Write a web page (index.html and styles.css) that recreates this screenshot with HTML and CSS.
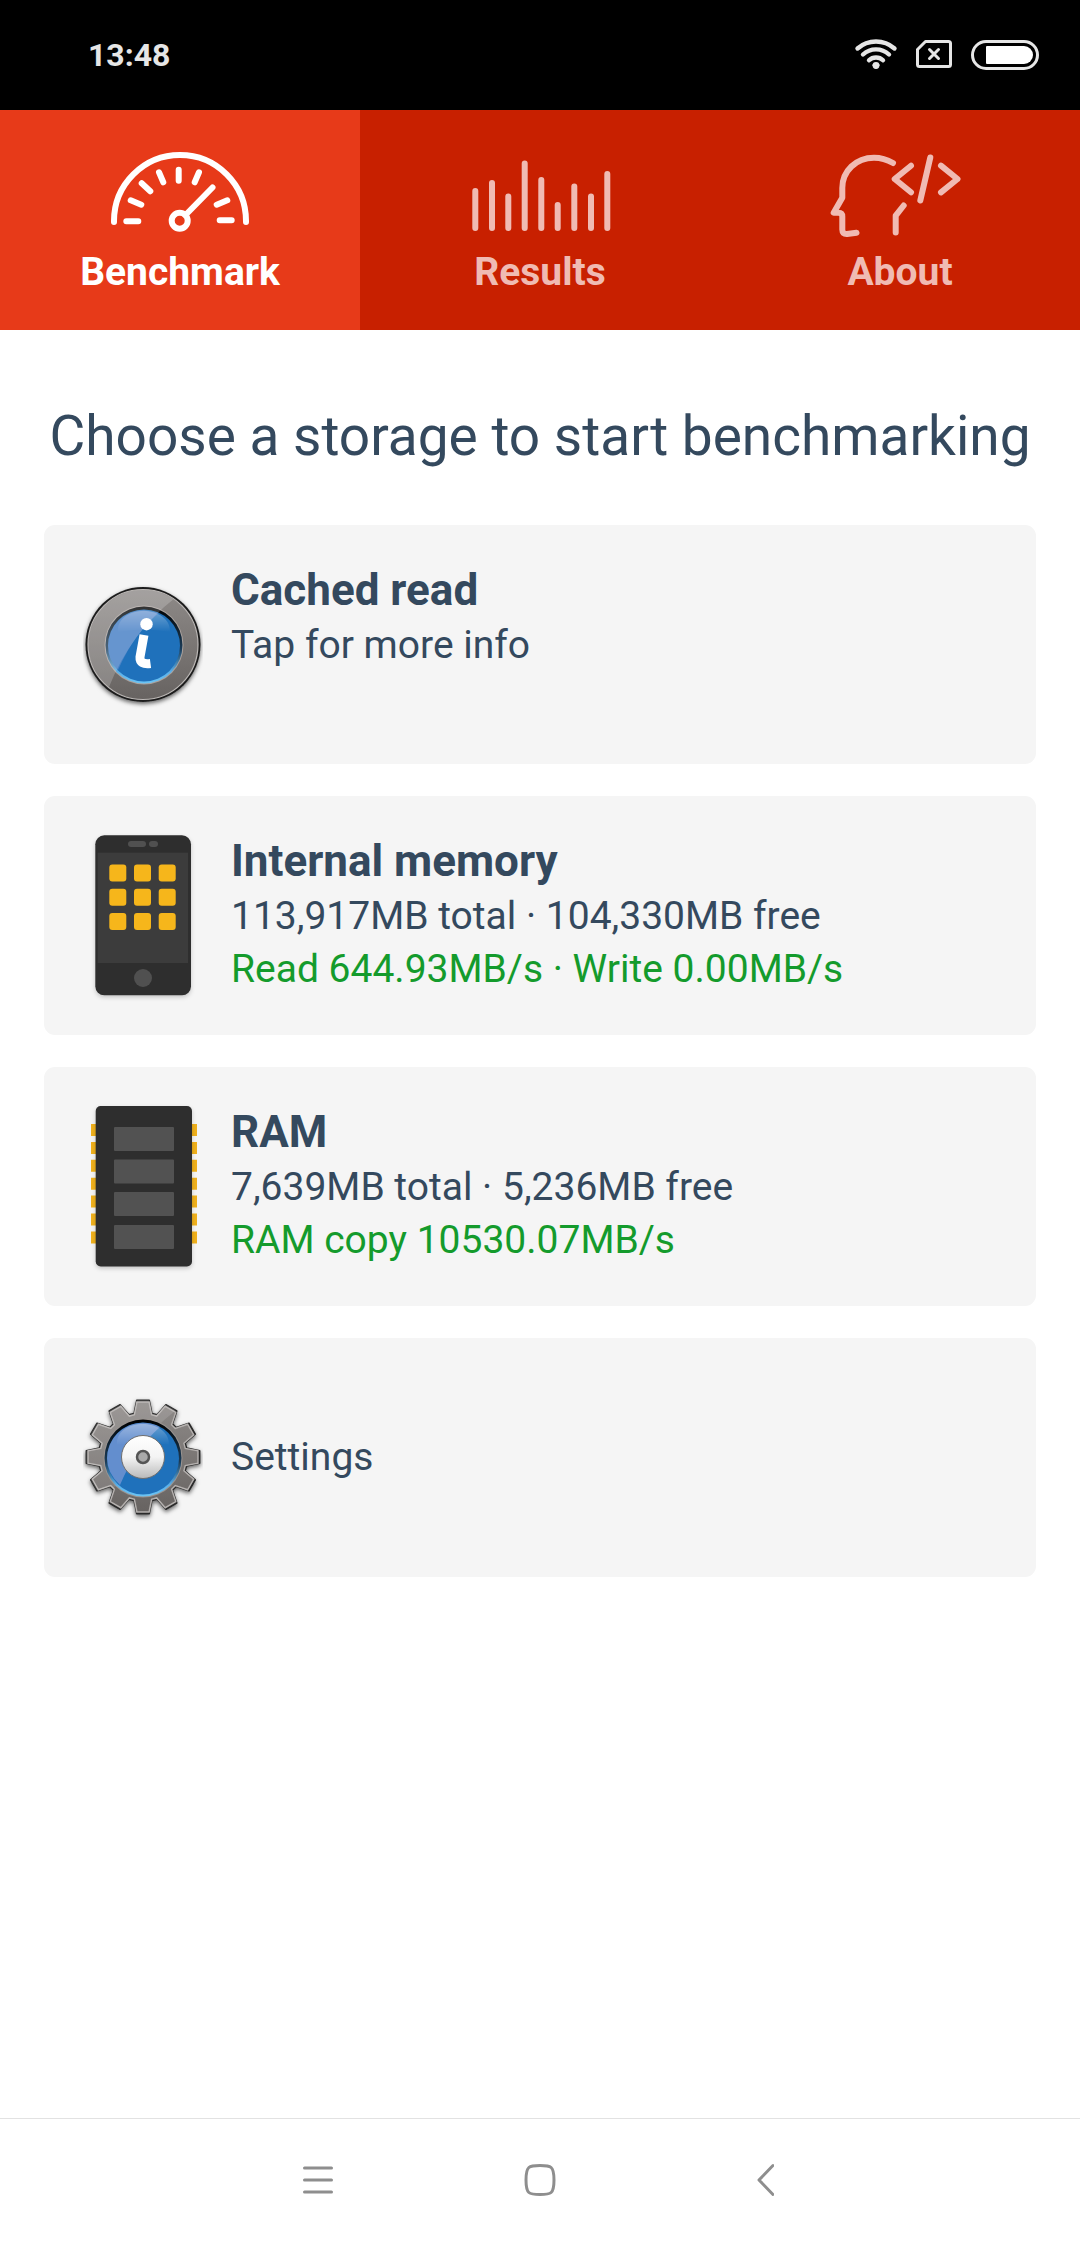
FILE: index.html
```html
<!DOCTYPE html>
<html lang="en">
<head>
    <meta charset="UTF-8">
    <meta name="viewport" content="width=device-width, initial-scale=1">
    <title>Storage benchmark</title>
    <link rel="stylesheet" href="styles.css">
</head>

<body>

<div class="status-bar">
    <span class="clock">13:48</span>
    <div class="status-icons">
        <svg width="44" height="40" viewBox="4 0 44 40" fill="none" stroke="#e6e6e6" stroke-width="4.4" stroke-linecap="round">
            <path d="M7.5 13.5A28 28 0 0 1 44.5 13.5"/>
            <path d="M13 19.5A19 19 0 0 1 39 19.5"/>
            <path d="M19 25.3A10 10 0 0 1 33 25.3"/>
            <path d="M22 30Q26 26 30 30L26 34Z" fill="#e6e6e6" stroke="none"/>
            <circle cx="26" cy="30.5" r="3.4" fill="#e6e6e6" stroke="none"/>
        </svg>
        <svg width="38" height="40" viewBox="65 0 38 40" fill="none" stroke="#e6e6e6" stroke-width="3" stroke-linejoin="round" stroke-linecap="round">
            <path d="M75.5 6.5H98.5Q100.5 6.5 100.5 8.5V29.5Q100.5 31.5 98.5 31.5H69.5Q67.5 31.5 67.5 29.5V14.5Z"/>
            <path d="M79.5 14.5L88.5 23.5M88.5 14.5L79.5 23.5"/>
        </svg>
        <svg width="70" height="40" viewBox="120 0 70 40">
            <rect x="122.5" y="6.5" width="65" height="27" rx="13.5" fill="none" stroke="#e6e6e6" stroke-width="3"/>
            <path d="M137 11H174A9 9 0 0 1 174 29H137Q136 29 136 28V12Q136 11 137 11Z" fill="#fff"/>
        </svg>
    </div>
</div>

<nav class="tabs">
    <button class="tab active">
        <svg width="150" height="104" viewBox="0 0 150 104" class="line-icon">
            <path d="M9 77V76A66 66 0 0 1 141 76V77"/>
            <path d="M73.7 24.7V35.7M54 27.3L58.3 37.3M36.7 38.3L45.3 46.3M25.7 55.3L36.3 59.7M21.3 76.3H33.3M94 27.3L89.7 37.3M122.3 55.3L111.7 59.7M114.7 75.3H126.7"/>
            <path d="M80.5 70L107.5 42.5"/>
            <circle cx="74.7" cy="75.7" r="8"/>
        </svg>
        <span>Benchmark</span>
    </button>
    <button class="tab">
        <svg width="150" height="104" viewBox="0 0 150 104" class="line-icon">
            <path d="M10.3 46V83M27 38V83M43.3 51.5V83M59.7 18.5V83M76.3 35V83M92.7 60V83M109.3 41.5V83M126 51.5V83M142.3 29V83"/>
        </svg>
        <span>Results</span>
    </button>
    <button class="tab">
        <svg width="150" height="104" viewBox="0 0 150 104" class="line-icon">
            <path d="M68 18C62 14.5 56 12.7 49 12.7C31 12.7 17.3 26 17.3 43V52.7L8.7 67.7H13.5Q17.3 67.7 17.3 71.5V84.5Q17.3 89.3 22 89L31.5 87.7"/>
            <path d="M86 20.7L69.7 34L86 47.3M105.3 12.5L95.3 55.5M116 20.7L132.5 34L116 47.3M78.7 60.5L70.7 70.7V87.5"/>
        </svg>
        <span>About</span>
    </button>
</nav>

<main class="content">
    <h1>Choose a storage to start benchmarking</h1>

    <div class="cards">
        <button class="card">
            <svg width="120" height="181" viewBox="0 0 120 181">
                <defs>
                    <linearGradient id="metal" x1="0" y1="0" x2="0" y2="1">
                        <stop offset="0" stop-color="#8e8a88"/>
                        <stop offset="1" stop-color="#676361"/>
                    </linearGradient>
                    <linearGradient id="rim" x1="0" y1="0" x2="0" y2="1">
                        <stop offset="0" stop-color="#000"/>
                        <stop offset="0.55" stop-color="#1b3c58"/>
                        <stop offset="0.85" stop-color="#5ab0ea"/>
                        <stop offset="1" stop-color="#6cc4f4"/>
                    </linearGradient>
                    <linearGradient id="gloss" x1="0" y1="0" x2="0" y2="1">
                        <stop offset="0" stop-color="#fff" stop-opacity="0.35"/>
                        <stop offset="1" stop-color="#fff" stop-opacity="0"/>
                    </linearGradient>
                    <linearGradient id="silver" x1="0" y1="0" x2="0" y2="1">
                        <stop offset="0" stop-color="#fff"/>
                        <stop offset="0.5" stop-color="#f4f4f4"/>
                        <stop offset="1" stop-color="#b9b9b9"/>
                    </linearGradient>
                    <filter id="shadow" x="-20%" y="-20%" width="140%" height="140%">
                        <feDropShadow dx="0" dy="2" stdDeviation="2" flood-opacity="0.6"/>
                    </filter>
                    <filter id="soft" x="-20%" y="-20%" width="140%" height="140%">
                        <feDropShadow dx="0" dy="2" stdDeviation="2" flood-opacity="0.2"/>
                    </filter>
                    <clipPath id="info-clip"><circle cx="60" cy="90.5" r="54.5"/></clipPath>
                </defs>
                <circle cx="60" cy="90.5" r="57.5" fill="#1c1c1c" filter="url(#shadow)"/>
                <circle cx="60" cy="90.5" r="55" fill="url(#metal)" stroke="#bcb8b6" stroke-width="1.2"/>
                <circle cx="61" cy="91" r="39.5" fill="#aaa29e"/>
                <circle cx="61" cy="91" r="38.5" fill="url(#rim)"/>
                <circle cx="61" cy="91.5" r="36" fill="#1f71bb"/>
                <path d="M0 30H95L92 44Q48 78 26 133L0 140Z" fill="#fff" fill-opacity="0.2" clip-path="url(#info-clip)"/>
                <path d="M35 78C33 50 88 50 87 78Q61 73 35 78Z" fill="url(#gloss)"/>
                <path d="M25 92A36 36 0 0 1 61 56L76 59Q52 78 35 116Q25 106 25 92Z" fill="#9aa6de" fill-opacity="0.35"/>
                <circle cx="63.5" cy="70.2" r="6.2" fill="#fff"/>
                <path d="M61 81L57 103Q56.5 111 67.5 109.5" fill="none" stroke="#fff" stroke-width="9"/>
            </svg>
            <span class="card-text">
                <strong>Cached read</strong>
                <span>Tap for more info</span>
                <span class="speed"></span>
            </span>
        </button>

        <button class="card">
            <svg width="120" height="181" viewBox="0 0 120 181">
                <rect x="12.3" y="10.3" width="95.7" height="160" rx="9" fill="#2f2f2f" filter="url(#soft)"/>
                <rect x="14.7" y="27.7" width="90.3" height="110.3" fill="#3c3c3c"/>
                <rect x="45" y="16" width="18" height="6" rx="3" fill="#505050"/>
                <rect x="66" y="16" width="9" height="6" rx="3" fill="#505050"/>
                <circle cx="60" cy="153" r="9" fill="#505050"/>
                <g fill="#f6b61b">
                    <rect x="26.3" y="39.5" width="17" height="17" rx="3"/>
                    <rect x="51" y="39.5" width="17" height="17" rx="3"/>
                    <rect x="75.7" y="39.5" width="17" height="17" rx="3"/>
                    <rect x="26.3" y="63.8" width="17" height="17" rx="3"/>
                    <rect x="51" y="63.8" width="17" height="17" rx="3"/>
                    <rect x="75.7" y="63.8" width="17" height="17" rx="3"/>
                    <rect x="26.3" y="88" width="17" height="17" rx="3"/>
                    <rect x="51" y="88" width="17" height="17" rx="3"/>
                    <rect x="75.7" y="88" width="17" height="17" rx="3"/>
                </g>
            </svg>
            <span class="card-text">
                <strong>Internal memory</strong>
                <span>113,917MB total · 104,330MB free</span>
                <span class="speed">Read 644.93MB/s · Write 0.00MB/s</span>
            </span>
        </button>

        <button class="card">
            <svg width="120" height="181" viewBox="0 0 120 181">
                <!-- pins, hidden behind the chip body in the middle -->
                <path d="M61 28V148" stroke="#f0b11c" stroke-width="106" stroke-dasharray="12 5.9"/>
                <rect x="12.7" y="10" width="96.3" height="160.5" rx="5" fill="#2f2f2f" filter="url(#soft)"/>
                <g fill="#525252">
                    <rect x="31" y="31" width="60" height="24" rx="1"/>
                    <rect x="31" y="63.5" width="60" height="24" rx="1"/>
                    <rect x="31" y="96" width="60" height="24" rx="1"/>
                    <rect x="31" y="129" width="60" height="24" rx="1"/>
                </g>
            </svg>
            <span class="card-text">
                <strong>RAM</strong>
                <span>7,639MB total · 5,236MB free</span>
                <span class="speed">RAM copy 10530.07MB/s</span>
            </span>
        </button>

        <button class="card">
            <svg width="120" height="181" viewBox="-60 -90 120 181">
                <defs>
                    <path id="gear" d="M-8.9 -43.6L-6.3 -56.7H6.3L8.9 -43.6L14.1 -42.2L22.9 -52.3L33.8 -46L29.5 -33.3L33.3 -29.5L46 -33.8L52.3 -22.9L42.2 -14.1L43.6 -8.9L56.7 -6.3V6.3L43.6 8.9L42.2 14.1L52.3 22.9L46 33.8L33.3 29.5L29.5 33.3L33.8 46L22.9 52.3L14.1 42.2L8.9 43.6L6.3 56.7H-6.3L-8.9 43.6L-14.1 42.2L-22.9 52.3L-33.8 46L-29.5 33.3L-33.3 29.5L-46 33.8L-52.3 22.9L-42.2 14.1L-43.6 8.9L-56.7 6.3V-6.3L-43.6 -8.9L-42.2 -14.1L-52.3 -22.9L-46 -33.8L-33.3 -29.5L-29.5 -33.3L-33.8 -46L-22.9 -52.3L-14.1 -42.2Z"/>
                    <clipPath id="gear-clip"><use href="#gear"/></clipPath>
                </defs>
                <use href="#gear" fill="#222" stroke="#2a2a2a" stroke-width="1.5" stroke-linejoin="round" filter="url(#shadow)"/>
                <use href="#gear" fill="url(#metal)" stroke="#b5b1af" stroke-width="1.5" transform="scale(0.97)"/>
                <path d="M-60 -60H38L32 -46Q-12 -12 -34 43L-60 50Z" fill="#fff" fill-opacity="0.12" clip-path="url(#gear-clip)"/>
                <circle cx="0" cy="1" r="39.5" fill="#9a9491"/>
                <circle cx="0" cy="1" r="38.5" fill="url(#rim)"/>
                <circle cx="0" cy="1.5" r="36" fill="#1f71bb"/>
                <path d="M-23 28Q-36 16 -36 1A36 36 0 0 1 17 -30Q-8 -8 -23 28Z" fill="#9aa6de" fill-opacity="0.55"/>
                <path d="M-26 -12C-28 -40 27 -40 26 -12Q0 -17 -26 -12Z" fill="url(#gloss)"/>
                <circle r="21.5" fill="url(#silver)" stroke="#6e6e6e" stroke-width="1"/>
                <circle r="6" fill="#aaa" stroke="#555" stroke-width="2.5"/>
            </svg>
            <span class="card-text">
                <span>Settings</span>
            </span>
        </button>
    </div>
</main>

<div class="nav-bar">
    <button aria-label="Menu">
        <svg width="32" height="34" viewBox="0 0 32 34"><path d="M2.5 5H29.5M2.5 17H29.5M2.5 29H29.5"/></svg>
    </button>
    <button aria-label="Home">
        <svg width="34" height="34" viewBox="0 0 34 34"><path d="M17 2.5C28 2.5 31 3 31 17C31 31 28 31.5 17 31.5C6 31.5 3 31 3 17C3 3 6 2.5 17 2.5Z"/></svg>
    </button>
    <button aria-label="Back">
        <svg width="24" height="34" viewBox="0 0 24 34"><path d="M23 2.5L9 17L23 31.5"/></svg>
    </button>
</div>

</body>
</html>
```
FILE: styles.css
```css
* {
    box-sizing: border-box;
}

body {
    margin: 0;
    min-height: 100vh;
    display: flex;
    flex-direction: column;
    background: #fff;
    color: #34495e;
    font-family: Roboto, "Liberation Sans", sans-serif;
    font-size: 39px;
}

button {
    margin: 0;
    padding: 0;
    border: none;
    background: none;
    color: inherit;
    font: inherit;
    cursor: pointer;
}

svg {
    display: block;
    flex: none;
}

/* system status bar */
.status-bar {
    height: 110px;
    padding: 0 40px 0 88px;
    display: flex;
    align-items: center;
    justify-content: space-between;
    background: #000;
}

.clock {
    color: #e6e6e6;
    font-size: 32px;
    font-weight: bold;
}

.status-icons {
    display: flex;
    gap: 17px;
}

/* tabs */
.tabs {
    display: grid;
    grid-template-columns: repeat(3, 1fr);
    background: #c82000;
}

.tab {
    height: 220px;
    display: flex;
    flex-direction: column;
    align-items: center;
    justify-content: center;
    color: #f0bbb3;
    font-weight: bold;
    line-height: 46px;
}

.tab.active {
    background: #e73a19;
    color: #fff;
}

.line-icon {
    fill: none;
    stroke: currentColor;
    stroke-width: 6px;
    stroke-linecap: round;
    stroke-linejoin: round;
}

/* storage list */
.content {
    flex: 1;
    padding: 74px 44px 32px;
}

h1 {
    margin: 0 -20px 57px;
    font-size: 55px;
    font-weight: normal;
    line-height: 64px;
    text-align: center;
}

.cards {
    display: flex;
    flex-direction: column;
    gap: 32px;
}

.card {
    min-height: 239px;
    padding: 0 39px;
    display: flex;
    align-items: center;
    gap: 28px;
    border-radius: 11px;
    background: #f5f5f5;
    text-align: left;
}

.card-text {
    display: flex;
    flex-direction: column;
    line-height: 53px;
}

.card-text strong {
    margin-bottom: 3px;
    font-size: 44px;
    line-height: 52px;
}

.speed {
    min-height: 53px;
    color: #149b2c;
}

/* system navigation */
.nav-bar {
    height: 130px;
    padding-bottom: 7px;
    display: flex;
    justify-content: center;
    border-top: 1px solid #e2e2e2;
}

.nav-bar button {
    width: 222px;
    display: flex;
    align-items: center;
    justify-content: center;
}

.nav-bar svg {
    fill: none;
    stroke: #8e8e8e;
    stroke-width: 3px;
    stroke-linecap: round;
    stroke-linejoin: round;
}
```
